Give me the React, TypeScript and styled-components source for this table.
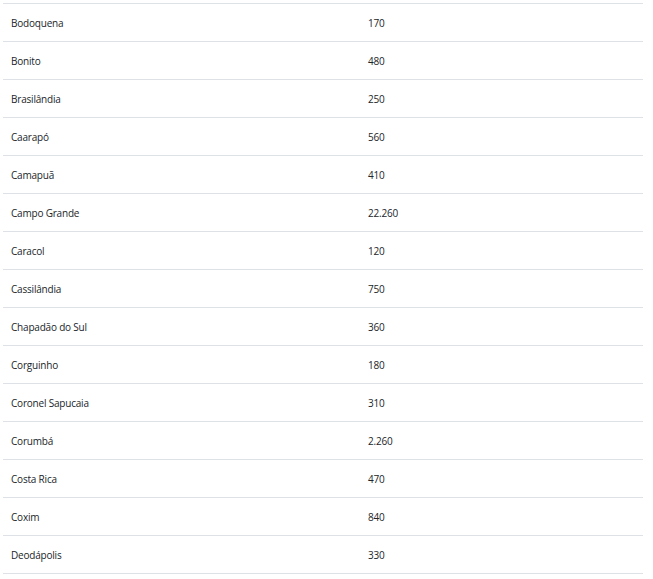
import React from "react";
import styled, { createGlobalStyle } from "styled-components";

const GlobalStyle = createGlobalStyle`
  html, body { margin: 0; padding: 0; background: #ffffff; }
  body { font-family: "Open Sans", "Noto Sans", Arial, sans-serif; }
`;

const Page = styled.div`
  padding: 3px 10px 0 3px;
`;

const Table = styled.div`
  width: 640px;
  border-bottom: 1px solid #dee2e6;
`;

const Row = styled.div`
  display: grid;
  grid-template-columns: 357px 1fr;
  height: 38px;
  box-sizing: border-box;
  border-top: 1px solid #dee2e6;
  align-items: center;
`;

const Cell = styled.div`
  padding: 0 8px;
  font-size: 10px;
  line-height: 14px;
  letter-spacing: -0.2px;
  color: #212529;
`;

const data: [string, string][] = [
  ["Bodoquena", "170"],
  ["Bonito", "480"],
  ["Brasilândia", "250"],
  ["Caarapó", "560"],
  ["Camapuã", "410"],
  ["Campo Grande", "22.260"],
  ["Caracol", "120"],
  ["Cassilândia", "750"],
  ["Chapadão do Sul", "360"],
  ["Corguinho", "180"],
  ["Coronel Sapucaia", "310"],
  ["Corumbá", "2.260"],
  ["Costa Rica", "470"],
  ["Coxim", "840"],
  ["Deodápolis", "330"],
];

export default function App() {
  return (
    <>
      <GlobalStyle />
      <Page>
        <Table>
          {data.map(([city, value]) => (
            <Row key={city}>
              <Cell>{city}</Cell>
              <Cell>{value}</Cell>
            </Row>
          ))}
        </Table>
      </Page>
    </>
  );
}
